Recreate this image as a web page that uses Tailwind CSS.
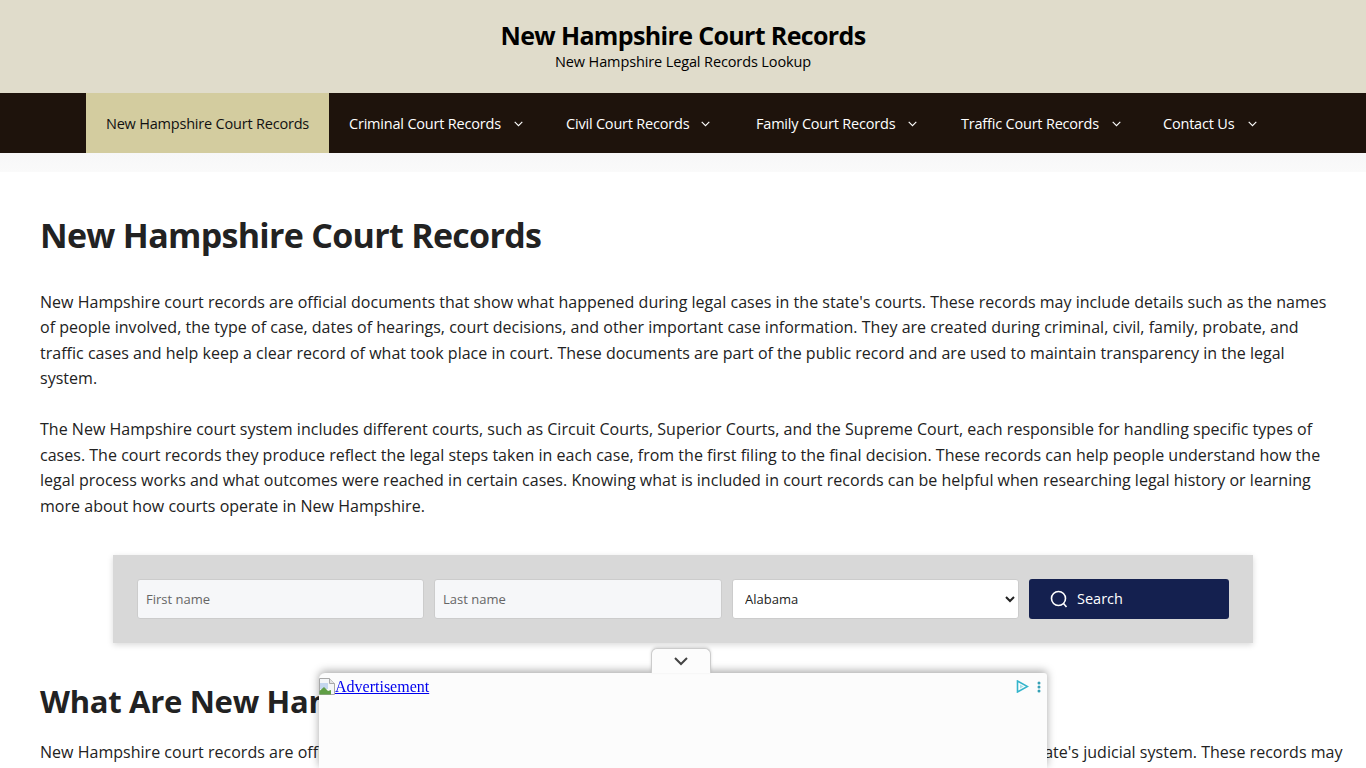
<!DOCTYPE html>
<html lang="en">
<head>
    <meta charset="UTF-8">
    <meta name="viewport" content="width=device-width, initial-scale=1.0">
    <title>New Hampshire Court Records</title>
    <script src="https://cdn.jsdelivr.net/npm/@tailwindcss/browser@4"></script>
</head>
<body class="bg-white h-screen overflow-hidden relative font-['Open_Sans',sans-serif] text-[#222]">
    <!-- Site header -->
    <header class="bg-[#e0dccb] h-[93px] text-center text-black pt-[19px]">
        <div class="text-[25px] leading-[33px] font-bold tracking-[-0.65px]">New Hampshire Court Records</div>
        <div class="text-[14.5px] leading-[20px] tracking-[-0.12px]">New Hampshire Legal Records Lookup</div>
    </header>

    <!-- Nav -->
    <nav class="bg-[#1e130c] h-[60px] pl-[86px] flex text-white text-[14.5px] tracking-[-0.2px]">
        <a class="bg-[#d3cc9f] text-[#111] w-[243px] flex items-center justify-center pt-[1px]">New Hampshire Court Records</a>
        <a class="w-[217px] pl-[20px] pt-[1px] flex items-center">Criminal Court Records
            <svg class="ml-[13px] w-[9px] h-[6px]" viewBox="0 0 9 6" fill="none" stroke="currentColor" stroke-width="1.1"><path d="M.7.8 4.5 4.6 8.3.8"/></svg>
        </a>
        <a class="w-[190px] pl-[20px] pt-[1px] flex items-center">Civil Court Records
            <svg class="ml-[12px] w-[9px] h-[6px]" viewBox="0 0 9 6" fill="none" stroke="currentColor" stroke-width="1.1"><path d="M.7.8 4.5 4.6 8.3.8"/></svg>
        </a>
        <a class="w-[205px] pl-[20px] pt-[1px] flex items-center">Family Court Records
            <svg class="ml-[13px] w-[9px] h-[6px]" viewBox="0 0 9 6" fill="none" stroke="currentColor" stroke-width="1.1"><path d="M.7.8 4.5 4.6 8.3.8"/></svg>
        </a>
        <a class="w-[202px] pl-[20px] pt-[1px] flex items-center">Traffic Court Records
            <svg class="ml-[13px] w-[9px] h-[6px]" viewBox="0 0 9 6" fill="none" stroke="currentColor" stroke-width="1.1"><path d="M.7.8 4.5 4.6 8.3.8"/></svg>
        </a>
        <a class="pl-[20px] pt-[1px] flex items-center">Contact Us
            <svg class="ml-[14px] w-[9px] h-[6px]" viewBox="0 0 9 6" fill="none" stroke="currentColor" stroke-width="1.1"><path d="M.7.8 4.5 4.6 8.3.8"/></svg>
        </a>
    </nav>
    <div class="h-[19px] bg-gradient-to-b from-[#f7f7f8] to-[#fafafa]"></div>

    <!-- Main content -->
    <main class="px-[40px] pt-[39px] text-[16px] leading-[25.5px] tracking-[0.02px]">
        <h1 class="text-[34px] leading-[48px] font-bold tracking-[-0.7px] text-[#222] mb-[30.5px]">New Hampshire Court Records</h1>
        <p class="mb-[25.5px] whitespace-nowrap">New Hampshire court records are official documents that show what happened during legal cases in the state's courts. These records may include details such as the names<br>of people involved, the type of case, dates of hearings, court decisions, and other important case information. They are created during criminal, civil, family, probate, and<br>traffic cases and help keep a clear record of what took place in court. These documents are part of the public record and are used to maintain transparency in the legal<br>system.</p>
        <p class="mb-[36px] whitespace-nowrap">The New Hampshire court system includes different courts, such as Circuit Courts, Superior Courts, and the Supreme Court, each responsible for handling specific types of<br>cases. The court records they produce reflect the legal steps taken in each case, from the first filing to the final decision. These records can help people understand how the<br>legal process works and what outcomes were reached in certain cases. Knowing what is included in court records can be helpful when researching legal history or learning<br>more about how courts operate in New Hampshire.</p>

        <!-- Search form -->
        <form class="mx-[73px] w-[1140px] h-[88px] bg-[#d8d8d8] shadow-[0_2px_6px_rgba(0,0,0,0.15)] p-[24px] flex gap-[10px] text-[13px] tracking-normal">
            <input type="text" placeholder="First name" class="w-[287px] h-[40px] bg-[#f6f7f9] border border-[#ccc] rounded-[3px] px-[8px] placeholder:text-[#666]">
            <input type="text" placeholder="Last name" class="w-[288px] h-[40px] bg-[#f6f7f9] border border-[#ccc] rounded-[3px] px-[8px] placeholder:text-[#666]">
            <select class="w-[287px] h-[40px] bg-white border border-[#ccc] rounded-[3px] px-[8px] text-[#222]">
                <option>Alabama</option>
            </select>
            <button type="button" class="w-[200px] h-[40px] bg-[#14204f] text-white rounded-[3px] flex items-center pl-[21px] text-[14.5px]">
                <svg class="w-[18px] h-[18px] mr-[9px]" viewBox="0 0 18 18" fill="none" stroke="currentColor" stroke-width="1.6"><circle cx="8.5" cy="8.5" r="7"/><path d="m13.5 13.5 3 3.5"/></svg>
                Search
            </button>
        </form>

        <h2 class="text-[31px] leading-[44px] font-bold tracking-[-0.3px] mt-[36px] mb-[17px] whitespace-nowrap">What Are New Hampshire Court Records?</h2>
        <p class="whitespace-nowrap">New Hampshire court records are official documents created during legal cases heard in the courts of New Hampshire as part of the state's judicial system. These records may</p>
    </main>

    <!-- Sticky ad -->
    <div class="fixed left-[319px] bottom-0 w-[728px] h-[95px] bg-[#fcfcfc] rounded-tl-[6px] rounded-tr-[3px] shadow-[0_-2px_8px_rgba(0,0,0,0.35)]">
        <div class="absolute left-[332px] -top-[25px] w-[60px] h-[25px] bg-[#fcfcfc] border border-b-0 border-[#ccc] rounded-t-[6px] flex items-center justify-center shadow-[0_-1px_3px_rgba(0,0,0,0.15)]">
            <svg class="w-[14px] h-[9px]" viewBox="0 0 14 9" fill="none" stroke="#444" stroke-width="2"><path d="m1 1 6 6 6-6"/></svg>
        </div>
        <a class="absolute left-0 top-[5px] flex items-start font-['Liberation_Serif',serif] text-[16px] leading-[18px] text-[#0000ee] underline">
            <svg class="w-[16px] h-[17px]" viewBox="0 0 16 17"><path d="M.5.500h10l5 5v11H.5z" fill="#f4f6f8" stroke="#a8a8a8"/><path d="M10.500.500v5h5" fill="#e4e4e4" stroke="#a8a8a8"/><path d="M1 5h8v6H1z" fill="#c4d6ee"/><path d="M.5 16.500V13L5 9l4 4 3-1v4.500z" fill="#5f9e45"/></svg>Advertisement
        </a>
        <svg class="absolute right-[18px] top-[7px] w-[13px] h-[13px]" viewBox="0 0 13 13" fill="none" stroke="#35b5cc" stroke-width="1.6"><path d="M1.500 1v11l10-5.500z"/><path d="M4 4.500v4l3.500-2z" fill="#a9dfe9" stroke="none"/></svg>
        <svg class="absolute right-[6px] top-[8px] w-[4px] h-[12px]" viewBox="0 0 4 12" fill="#35a0b5"><circle cx="2" cy="2" r="1.500"/><circle cx="2" cy="6" r="1.500"/><circle cx="2" cy="10" r="1.500"/></svg>
    </div>
</body>
</html>
